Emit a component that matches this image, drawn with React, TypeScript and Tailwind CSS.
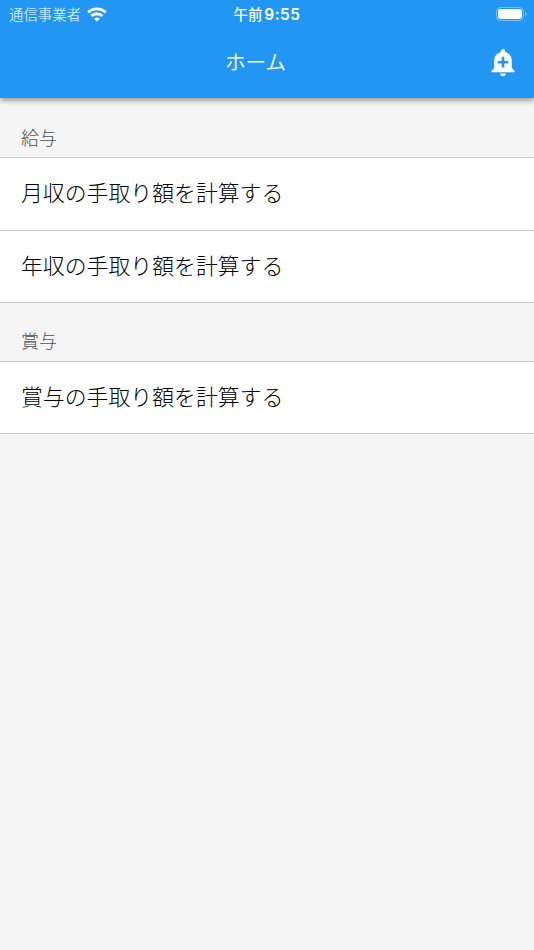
import React from 'react';

interface Section {
  title: string;
  items: string[];
}

const sections: Section[] = [
  { title: '給与', items: ['月収の手取り額を計算する', '年収の手取り額を計算する'] },
  { title: '賞与', items: ['賞与の手取り額を計算する'] },
];

const AddAlertIcon: React.FC = () => (
  <svg width="24" height="28" viewBox="0 0 24 28" fill="currentColor">
    <path
      fillRule="evenodd"
      d="M12 0c1.200 0 2.100.9 2.100 2.100v.9C18.200 4 20.800 7.500 20.800 11.600v7.500l2.700 2.700v1.400H.5v-1.400l2.700-2.700v-7.500C3.200 7.500 5.800 4 9.900 3v-.9C9.900.9 10.800 0 12 0zm-1.300 7.800v4.100H6.700v2.500h4v4.100h2.600v-4.100h4v-2.500h-4V7.800z"
    />
    <path d="M9.300 24.600h5.400a2.700 2.700 0 0 1-5.400 0z" />
  </svg>
);

const StatusBar: React.FC = () => (
  <div className="h-[27px] grid grid-cols-3 items-center pl-[9px] pr-[7px]">
    <div className="flex items-center gap-[6px]">
      <span className="text-[14.4px] leading-[27px] pt-px font-light whitespace-nowrap">通信事業者</span>
      <svg width="20" height="15" viewBox="0 0 20 15" fill="none" stroke="currentColor" strokeWidth="2.9">
        <path d="M1.100 5.400a12.700 12.700 0 0 1 17.600 0" />
        <path d="M4.400 9a8 8 0 0 1 11 0" />
        <path d="M9.900 14.600 7 11.700a4.300 4.300 0 0 1 5.800 0z" fill="currentColor" stroke="none" />
      </svg>
    </div>
    <div className="flex justify-center gap-[2px] pt-px pr-[2px] leading-[27px] whitespace-nowrap">
      <span className="text-[14.4px] font-medium">午前</span>
      <span className="text-[15.4px] font-semibold tracking-[0.5px]">9:55</span>
    </div>
    <div className="flex justify-end">
      <svg width="31" height="15" viewBox="0 0 31 15" fill="none">
        <rect x="0.500" y="0.500" width="27" height="13" rx="4" stroke="currentColor" strokeOpacity="0.400" />
        <rect x="2" y="2" width="24" height="10" rx="2.400" fill="currentColor" />
        <path d="M29 4.500v5c1-.4 1.700-1.400 1.700-2.500S30 4.900 29 4.500z" fill="currentColor" fillOpacity="0.400" />
      </svg>
    </div>
  </div>
);

export default function App() {
  return (
    <div className="min-h-screen bg-[#f5f5f5] font-['Inter','Noto_Sans_CJK_JP',sans-serif]">
      <header className="relative h-[98px] bg-[#2196f3] text-white shadow-[0_3px_5px_rgba(0,0,0,0.35)]">
        <StatusBar />
        <div className="h-[71px] flex items-center pl-[20px] pr-[19px]">
          <h1 className="grow text-center text-[20.6px] leading-[30px] font-[350]">ホーム</h1>
          <button aria-label="通知を追加">
            <AddAlertIcon />
          </button>
        </div>
      </header>

      <main className="pt-px">
        {sections.map((section) => (
          <section key={section.title}>
            <h2 className="h-[59.2px] pt-[25.5px] pl-[21px] text-lg leading-[27px] font-light text-[#505050] border-b border-[#cccccc]">
              {section.title}
            </h2>
            <ul className="bg-white">
              {section.items.map((item) => (
                <li key={item} className="h-[72.36px] flex items-center pl-[21px] text-[21.87px] font-light text-black border-b border-[#cccccc]">
                  {item}
                </li>
              ))}
            </ul>
          </section>
        ))}
      </main>
    </div>
  );
}
